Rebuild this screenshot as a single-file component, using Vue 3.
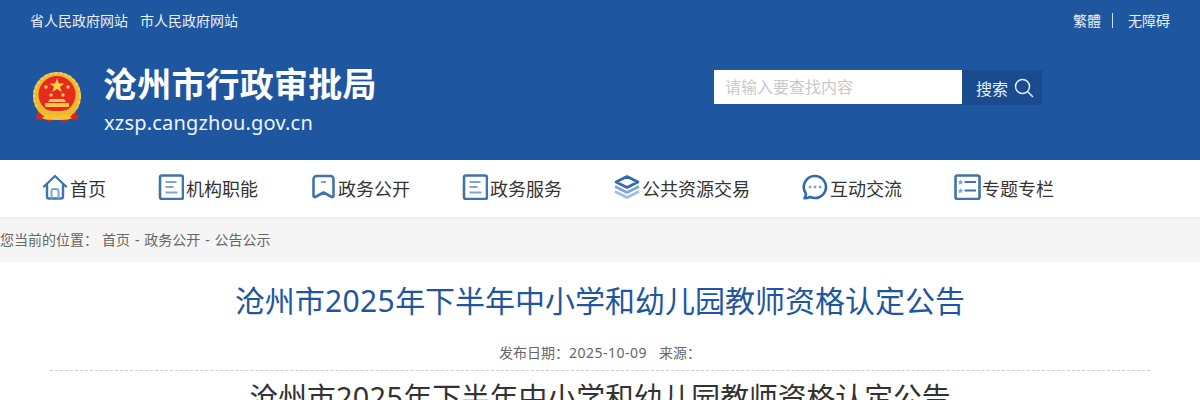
<script setup>
const nav = [
  { label: '首页', icon: 'home' },
  { label: '机构职能', icon: 'list' },
  { label: '政务公开', icon: 'mark' },
  { label: '政务服务', icon: 'list' },
  { label: '公共资源交易', icon: 'layers' },
  { label: '互动交流', icon: 'chat' },
  { label: '专题专栏', icon: 'star' }
]
</script>

<template>
  <div class="page">
    <header class="head">
      <div class="top">
        <div class="links"><a>省人民政府网站</a><a>市人民政府网站</a></div>
        <div class="tools"><a>繁體</a><i class="bar"></i><a>无障碍</a></div>
      </div>
      <div class="brand">
        <div class="logo">
          <svg class="emblem" width="50" height="54" viewBox="0 0 50 54">
            <path d="M7 35 L4 48 L13 47 L17 50 L25 47 L33 50 L37 47 L46 48 L43 35 Z" fill="#d8261d"/>
            <circle cx="25" cy="24" r="24" fill="#eeb92f"/>
            <circle cx="25" cy="24" r="23" fill="none" stroke="#f4cf62" stroke-width="2" stroke-dasharray="3 2"/>
            <circle cx="25" cy="22.500" r="18.500" fill="#e8291f"/>
            <polygon points="25,6 26.900,11.500 32.500,11.500 28,14.800 29.700,20 25,16.900 20.300,20 22,14.800 17.500,11.500 23.100,11.500" fill="#f6d34a"/>
            <circle cx="14" cy="15" r="1.700" fill="#f6d34a"/>
            <circle cx="36" cy="15" r="1.700" fill="#f6d34a"/>
            <circle cx="19" cy="23" r="1.700" fill="#f6d34a"/>
            <circle cx="31" cy="23" r="1.700" fill="#f6d34a"/>
            <path d="M18 27 H32 L34 30 H16 Z" fill="#f6d34a"/>
            <rect x="13" y="31" width="24" height="4" fill="#f4c84a"/>
            <path d="M4 33 C12 41 38 41 46 33 L43 40 C36 46 14 46 7 40 Z" fill="#eeb92f"/>
            <path d="M10 46 C15 42 20 42 25 45 C30 42 35 42 40 46 C34 49 30 47 25 48 C20 47 16 49 10 46 Z" fill="#f2c335"/>
          </svg>
          <div class="names">
            <h1>沧州市行政审批局</h1>
            <p>xzsp.cangzhou.gov.cn</p>
          </div>
        </div>
        <div class="search">
          <div class="field">请输入要查找内容</div>
          <div class="btn">
            <span>搜索</span>
            <svg width="20" height="20" viewBox="0 0 20 20" fill="none" stroke="#eaf1fb" stroke-width="1.500">
              <circle cx="8.500" cy="8.500" r="7"/>
              <path d="M13.500 13.500 L19 19"/>
            </svg>
          </div>
        </div>
      </div>
    </header>

    <nav class="nav">
      <a v-for="item in nav" :key="item.label" class="nav-item">
        <span class="ico">
          <svg v-if="item.icon === 'home'" width="26" height="26" viewBox="0 0 26 26" fill="none" stroke="#3f74ad" stroke-width="2.400" stroke-linejoin="round" stroke-linecap="round">
            <path d="M2 12.500 L13 2 L24 12.500 M5 10.500 V22.500 A2 2 0 0 0 7 24.500 H19 A2 2 0 0 0 21 22.500 V10.500"/>
            <path d="M9.500 24 V17 A2 2 0 0 1 11.500 15 H14.500 A2 2 0 0 1 16.500 17 V24" stroke="#7aa5d6" stroke-width="2"/>
          </svg>
          <svg v-else-if="item.icon === 'list'" width="26" height="26" viewBox="0 0 26 26" fill="none">
            <rect x="2" y="1.500" width="23" height="23.500" rx="2" stroke="#3f74ad" stroke-width="2.600"/>
            <path d="M7.500 8 H18.500 M7.500 13 H15.500 M7.500 18.500 H19.500" stroke="#7aa5d6" stroke-width="2"/>
          </svg>
          <svg v-else-if="item.icon === 'mark'" width="26" height="26" viewBox="0 0 26 26" fill="none">
            <path d="M3.500 5 A3 3 0 0 1 6.500 2 H20.500 A3 3 0 0 1 23.500 5 V22 A1.200 1.200 0 0 1 21.800 23 L13.500 18.500 L5.200 23 A1.200 1.200 0 0 1 3.500 22 Z" stroke="#3f74ad" stroke-width="2.600" stroke-linejoin="round"/>
            <path d="M11 8 H16" stroke="#7aa5d6" stroke-width="2"/>
          </svg>
          <svg v-else-if="item.icon === 'layers'" width="28" height="26" viewBox="0 0 28 26" fill="none" stroke-linejoin="round">
            <path d="M13 2.500 L24 8 L13 13.500 L2 8 Z" stroke="#2f6ba8" stroke-width="2.600"/>
            <path d="M1 12.500 L13 18.500 L25 12.500" stroke="#7aa5d6" stroke-width="2.600"/>
            <path d="M1 17.500 L13 23.500 L25 17.500" stroke="#9dbfe6" stroke-width="2.600"/>
          </svg>
          <svg v-else-if="item.icon === 'chat'" width="26" height="26" viewBox="0 0 26 26" fill="none">
            <path d="M13 2 A11 11 0 1 1 8 22.800 C6.500 23.800 5 24.300 2.500 24.300 C3.500 23 4 21 3.800 19.300 A11 11 0 0 1 13 2 Z" stroke="#2f6ba8" stroke-width="2.600" stroke-linejoin="round"/>
            <circle cx="8" cy="13" r="1.400" fill="#7aa5d6"/>
            <circle cx="13" cy="13" r="1.400" fill="#7aa5d6"/>
            <circle cx="18" cy="13" r="1.400" fill="#7aa5d6"/>
          </svg>
          <svg v-else width="28" height="26" viewBox="0 0 28 26" fill="none">
            <rect x="1.500" y="1.500" width="24" height="23.500" rx="2" stroke="#3f74ad" stroke-width="2.600"/>
            <path d="M10.500 8 H22 M10.500 16.500 H22" stroke="#3f74ad" stroke-width="2.200"/>
            <path d="M6.500 5.500 L7.300 7.300 L9.200 7.500 L7.800 8.800 L8.200 10.700 L6.500 9.700 L4.800 10.700 L5.200 8.800 L3.800 7.500 L5.700 7.300 Z M6.500 14 L7.300 15.800 L9.200 16 L7.800 17.300 L8.200 19.200 L6.500 18.200 L4.800 19.200 L5.200 17.300 L3.800 16 L5.700 15.800 Z" fill="#7aa5d6"/>
          </svg>
        </span>
        <span class="nav-text">{{ item.label }}</span>
      </a>
    </nav>

    <div class="crumb"><span>您当前的位置：</span><span class="path">首页 - 政务公开 - 公告公示</span></div>

    <main class="article">
      <h2>沧州市<span class="num">2025</span>年下半年中小学和幼儿园教师资格认定公告</h2>
      <div class="meta"><span>发布日期：<span class="date">2025-10-09</span></span><span>来源：</span></div>
      <h3>沧州市<span class="num">2025</span>年下半年中小学和幼儿园教师资格认定公告</h3>
    </main>
  </div>
</template>

<style>
html, body { margin: 0; background: #fff; overflow: hidden; }
</style>

<style scoped>
.page {
  width: 1200px;
  height: 400px;
  overflow: hidden;
  font-family: "Noto Sans", "Noto Sans CJK SC", sans-serif;
}
.head {
  height: 160px;
  background: #1f56a0;
  color: #fff;
  box-sizing: border-box;
  padding: 0 30px;
}
.top {
  height: 40px;
  display: flex;
  justify-content: space-between;
  align-items: center;
  font-size: 14px;
  color: #eaf1fb;
}
.links { display: flex; gap: 12px; }
.tools { display: flex; align-items: center; }
.bar { width: 1px; height: 15px; background: #cfe0f3; margin: 0 15px 0 11px; }
.brand {
  display: flex;
  padding-top: 30px;
  align-items: flex-start;
}
.logo { display: flex; width: 684px; }
.emblem { margin: 2px 21px 0 2px; }
.names h1 {
  margin: -7px 0 0;
  font-size: 34px;
  line-height: 42px;
  font-weight: 700;
  letter-spacing: 0.2px;
  white-space: nowrap;
}
.names p {
  margin: 5px 0 0 1px;
  font-size: 20px;
  line-height: 26px;
  letter-spacing: 0.2px;
  color: #eef4fb;
}
.search { display: flex; }
.field {
  width: 248px;
  height: 34px;
  background: #fff;
  box-sizing: border-box;
  padding-left: 11px;
  font-size: 16px;
  line-height: 34px;
  color: #c9c9c9;
}
.btn {
  width: 80px;
  height: 35px;
  background: #1b4b8f;
  display: flex;
  align-items: center;
  box-sizing: border-box;
  padding-left: 14px;
  gap: 6px;
  font-size: 16px;
  color: #eaf1fb;
}
.nav {
  height: 57px;
  background: #fff;
  display: flex;
  align-items: center;
  padding-left: 16px;
  position: relative;
  box-shadow: 0 1px 4px rgba(0, 0, 0, 0.08);
}
.nav-item {
  display: flex;
  align-items: center;
  padding: 0 26px;
  color: #333;
  font-size: 18px;
  white-space: nowrap;
}
.ico { width: 28px; height: 26px; display: flex; align-items: center; margin-top: -3px; }
.nav-text { line-height: 26px; margin-top: 1px; }
.crumb {
  height: 45px;
  box-sizing: border-box;
  padding-bottom: 2px;
  background: #f5f5f5;
  display: flex;
  align-items: center;
  gap: 4px;
  font-size: 14px;
  color: #666;
  white-space: nowrap;
}
.path { word-spacing: 1.250px; }
.article { padding: 0 50px; text-align: center; }
h2 {
  margin: 0;
  padding-top: 19px;
  font-size: 30px;
  line-height: 40px;
  font-weight: 400;
  color: #1f56a0;
}
.num { letter-spacing: 0.400px; }
.date { letter-spacing: 0.500px; }
.meta {
  margin-top: 21px;
  height: 28px;
  display: flex;
  justify-content: center;
  gap: 12px;
  font-size: 14px;
  line-height: 22px;
  color: #666;
  border-bottom: 1px dashed #ccc;
}
h3 {
  margin: 4px 0 0;
  font-size: 28.800px;
  line-height: 44px;
  font-weight: 400;
  color: #333;
}
</style>
